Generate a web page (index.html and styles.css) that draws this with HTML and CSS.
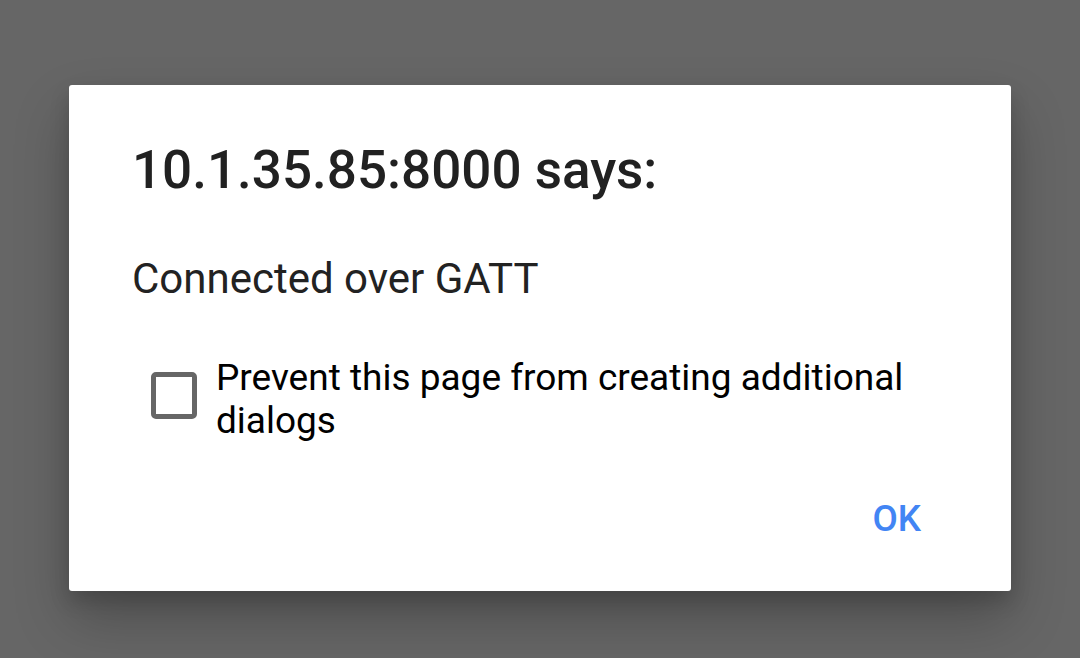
FILE: index.html
```html
<!DOCTYPE html>
<html lang="en">

<head>
  <meta charset="UTF-8" />
  <meta name="viewport" content="width=device-width, initial-scale=1.0" />
  <title>10.1.35.85:8000 says:</title>
  <link rel="stylesheet" href="styles.css">
</head>

<body>
  <div class="scrim">
    <div class="dialog">
      <h1 class="dialog-title">10.1.35.85:8000 says:</h1>
      <p class="dialog-message">Connected over GATT</p>
      <label class="suppress-row">
        <input type="checkbox" class="suppress-input">
        <span class="checkbox-box"></span>
        <span class="suppress-label">Prevent this page from creating additional dialogs</span>
      </label>
      <div class="button-bar">
        <button class="btn-text">OK</button>
      </div>
    </div>
  </div>
</body>

</html>
```

FILE: styles.css
```css
:root {
  --color-scrim: #666;
  --color-surface: #fff;
  --color-title: #212121;
  --color-text: #222;
  --color-label: #000;
  --color-control: #666;
  --color-accent: #4285f4;
  --font-base: Roboto, "Noto Sans", sans-serif;
}

* {
  box-sizing: border-box;
  margin: 0;
  padding: 0;
}

html,
body {
  height: 100%;
}

body {
  font-family: var(--font-base);
  background-color: var(--color-scrim);
  -webkit-font-smoothing: antialiased;
}

.scrim {
  height: 100%;
  padding-top: 85px;
  overflow: hidden;
}

.dialog {
  width: 942px;
  margin: 0 auto;
  padding: 54px 63px 51px;
  background-color: var(--color-surface);
  border-radius: 3px;
  box-shadow: 0 28px 56px rgba(0, 0, 0, 0.24), 0 10px 20px rgba(0, 0, 0, 0.16);
}

.dialog-title {
  font-size: 53px;
  line-height: 62px;
  font-weight: 500;
  color: var(--color-title);
}

.dialog-message {
  margin-top: 53px;
  font-size: 42px;
  line-height: 50px;
  color: var(--color-text);
}

.suppress-row {
  display: flex;
  align-items: flex-start;
  margin-top: 52px;
  cursor: pointer;
}

.suppress-input {
  display: none;
}

.checkbox-box {
  flex: none;
  width: 46px;
  height: 47px;
  margin: 16px 0 0 19px;
  border: 5px solid var(--color-control);
  border-radius: 5px;
}

.suppress-label {
  margin-left: 19px;
  font-size: 37px;
  line-height: 43px;
  color: var(--color-label);
}

.button-bar {
  display: flex;
  justify-content: flex-end;
  margin-top: 55px;
  padding-right: 27px;
}

.btn-text {
  border: none;
  background: none;
  font-family: inherit;
  font-size: 36.75px;
  line-height: 43px;
  font-weight: 500;
  text-transform: uppercase;
  color: var(--color-accent);
  cursor: pointer;
}
```
